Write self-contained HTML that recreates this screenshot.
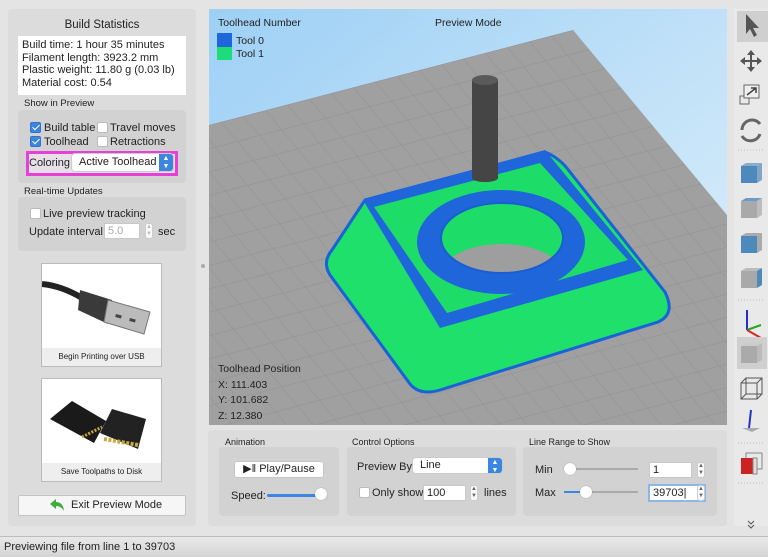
<!DOCTYPE html>
<html><head><style>
*{box-sizing:border-box;margin:0;padding:0}
body{width:768px;height:557px;overflow:hidden;background:#e4e4e4;font-family:"Liberation Sans",sans-serif;font-size:11px;color:#222;position:relative}
.a{position:absolute}
.grp{position:absolute;background:#d9d9d9;border-radius:4px}
.cb{position:absolute;width:11px;height:11px;border-radius:2px;background:#fff;border:1px solid #bbb}
.cb.on{background:#3b86e0;border-color:#2f74c8}
.cb.on:after{content:"";position:absolute;left:3px;top:0px;width:3px;height:6px;border:solid #fff;border-width:0 1.5px 1.5px 0;transform:rotate(45deg)}
.inp{position:absolute;background:#fff;border:1px solid #c8c8c8;height:16px;padding-left:3px;line-height:14px}
.step{position:absolute;width:8px;height:16px;border:1px solid #ccc;border-radius:3px;background:#fafafa;font-size:6px;line-height:7px;text-align:center;color:#666}
.sel{position:absolute;background:#fff;border-radius:3px;height:17px;line-height:17px;padding-left:7px;box-shadow:0 0 0 1px #ccc}
.sel i{position:absolute;right:0;top:0;width:14px;height:17px;background:#3b86e0;border-radius:0 3px 3px 0;color:#fff;font-style:normal;font-size:7px;line-height:8px;text-align:center;padding-top:1px}
.t{position:absolute;white-space:nowrap}
</style></head><body>
<div class="a" style="left:8px;top:9px;width:188px;height:517px;background:#dcdcdc;border-radius:4px"></div>
<div class="t" style="left:0;width:204px;text-align:center;top:19px;font-size:11.5px">Build Statistics</div>
<div class="a" style="left:18px;top:36px;width:168px;height:59px;background:#fff;padding:3px 4px;line-height:12.5px;font-size:11px">Build time: 1 hour 35 minutes<br>Filament length: 3923.2 mm<br>Plastic weight: 11.80 g (0.03 lb)<br>Material cost: 0.54</div>
<div class="t" style="left:24px;top:98px;font-size:9.5px">Show in Preview</div>
<div class="grp" style="left:18px;top:110px;width:168px;height:73px;background:#d2d2d2"></div>
<div class="cb on" style="left:30px;top:122px"></div><div class="t" style="left:44px;top:122px">Build table</div>
<div class="cb" style="left:97px;top:122px"></div><div class="t" style="left:110px;top:122px">Travel moves</div>
<div class="cb on" style="left:30px;top:136px"></div><div class="t" style="left:44px;top:136px">Toolhead</div>
<div class="cb" style="left:97px;top:136px"></div><div class="t" style="left:110px;top:136px">Retractions</div>
<div class="a" style="left:26px;top:151px;width:152px;height:25px;border:3px solid #e83fd8;background:#e8e0e8"></div>
<div class="t" style="left:29px;top:157px">Coloring</div>
<div class="sel" style="left:72px;top:154px;width:101px">Active Toolhead<i>▲<br>▼</i></div>
<div class="t" style="left:24px;top:186px;font-size:9.5px">Real-time Updates</div>
<div class="grp" style="left:18px;top:197px;width:168px;height:54px;background:#d2d2d2"></div>
<div class="cb" style="left:30px;top:208px"></div><div class="t" style="left:43px;top:208px">Live preview tracking</div>
<div class="t" style="left:29px;top:226px">Update interval</div>
<div class="inp" style="left:104px;top:223px;width:36px;color:#aaa">5.0</div>
<div class="step" style="left:145px;top:223px;color:#bbb">▲<br>▼</div>
<div class="t" style="left:158px;top:226px">sec</div>
<div class="a" style="left:41px;top:263px;width:121px;height:104px;background:#fff;border:1px solid #bbb"></div>
<svg class="a" style="left:42px;top:264px" width="119" height="84">
<path d="M0 20 Q20 22 40 34" stroke="#222" stroke-width="6" fill="none"/>
<path d="M38 26 L70 36 L66 60 L36 46 Z" fill="#3a3a3a"/>
<path d="M66 36 L108 48 L102 70 L62 58 Z" fill="#bbb" stroke="#777"/>
<rect x="74" y="50" width="6" height="3" fill="#444" transform="rotate(16 74 50)"/>
<rect x="88" y="54" width="6" height="3" fill="#444" transform="rotate(16 88 54)"/>
</svg>
<div class="a" style="left:42px;top:348px;width:119px;height:18px;background:#eee;font-size:8px;text-align:center;line-height:18px">Begin Printing over USB</div>
<div class="a" style="left:41px;top:378px;width:121px;height:104px;background:#fff;border:1px solid #bbb"></div>
<svg class="a" style="left:42px;top:379px" width="119" height="84">
<path d="M8 40 L30 22 L64 42 L52 64 Z" fill="#1a1a1a"/>
<path d="M58 54 L70 30 L104 40 L96 70 Z" fill="#222"/>
<path d="M62 60 L96 66" stroke="#c8a840" stroke-width="4" stroke-dasharray="3 1.5"/>
<path d="M40 58 L60 48" stroke="#c8a840" stroke-width="3" stroke-dasharray="2 1.5"/>
</svg>
<div class="a" style="left:42px;top:463px;width:119px;height:18px;background:#eee;font-size:8px;text-align:center;line-height:18px">Save Toolpaths to Disk</div>
<div class="a" style="left:18px;top:495px;width:168px;height:21px;background:#f6f6f6;border:1px solid #c4c4c4;border-radius:2px"></div>
<svg class="a" style="left:48px;top:499px" width="18" height="13"><path d="M2 5 L8 0 L8 3 Q15 3 16 12 Q13 7 8 7 L8 10 Z" fill="#3cae3c"/></svg>
<div class="t" style="left:71px;top:499px">Exit Preview Mode</div>
<div class="a" style="left:201px;top:264px;width:4px;height:4px;border-radius:2px;background:#aaa"></div>
<svg class="a" style="left:209px;top:9px" width="518" height="416" viewBox="209 9 518 416">
<defs>
<linearGradient id="sky" x1="0" y1="0" x2="1" y2="1"><stop offset="0" stop-color="#9dd0f5"/><stop offset="1" stop-color="#e2f1fb"/></linearGradient>
<pattern id="grid" width="1" height="1" patternUnits="userSpaceOnUse" patternTransform="matrix(22 -5.74 16 19.2 573 30)"><rect width="1" height="1" fill="#a0a0a0"/><path d="M0 0H1M0 0V1" stroke="#929292" stroke-width="0.05"/></pattern>
<clipPath id="hole"><ellipse cx="502" cy="238" rx="61" ry="35"/></clipPath>
</defs>
<rect x="209" y="9" width="518" height="416" fill="url(#sky)"/>
<path d="M209 125 L573 30 L727 215 L727 425 L209 425 Z" fill="url(#grid)"/>
<path d="M365 200 L545 152 Q560 158 570 172 L665 292 Q676 314 658 322 L440 390 Q420 396 410 384 L330 275 Q322 262 332 250 Z" fill="#1ee06a" stroke="#1a62d8" stroke-width="3"/>
<path d="M363 200 L545 150 L643 270 L440 328 Z" fill="#1f66db"/>
<path d="M374 207 L540 163 L628 260 L447 313 Z" fill="#1edc68"/>
<ellipse cx="501" cy="242" rx="84" ry="52" fill="#1f66db"/>
<ellipse cx="502" cy="238" rx="61" ry="35" fill="#1edc68"/>
<ellipse cx="502" cy="274" rx="60" ry="30" fill="#9e9e9e" clip-path="url(#hole)"/>
<ellipse cx="502" cy="238" rx="61" ry="35" fill="none" stroke="#1a5ed0" stroke-width="2"/>
<rect x="472" y="80" width="26" height="98" fill="#454545"/>
<ellipse cx="485" cy="80" rx="13" ry="5" fill="#5a5a5a"/>
<ellipse cx="485" cy="178" rx="13" ry="4" fill="#454545"/>
</svg>
<div class="t" style="left:218px;top:17px;font-size:10.5px">Toolhead Number</div>
<div class="t" style="left:435px;top:17px;font-size:10.5px">Preview Mode</div>
<div class="a" style="left:217px;top:33px;width:15px;height:14px;background:#1f66db"></div>
<div class="a" style="left:217px;top:47px;width:15px;height:13px;background:#1edc7a"></div>
<div class="t" style="left:236px;top:35px;font-size:10.5px">Tool 0</div>
<div class="t" style="left:236px;top:48px;font-size:10.5px">Tool 1</div>
<div class="t" style="left:218px;top:362px;font-size:10.5px;line-height:15.7px">Toolhead Position<br>X: 111.403<br>Y: 101.682<br>Z: 12.380</div>
<div class="a" style="left:208px;top:430px;width:519px;height:96px;background:#dcdcdc;border-radius:4px"></div>
<div class="t" style="left:225px;top:437px;font-size:9px">Animation</div>
<div class="t" style="left:352px;top:437px;font-size:9px">Control Options</div>
<div class="t" style="left:529px;top:437px;font-size:9px">Line Range to Show</div>
<div class="grp" style="left:219px;top:447px;width:120px;height:69px;background:#d2d2d2"></div>
<div class="grp" style="left:347px;top:447px;width:169px;height:69px;background:#d2d2d2"></div>
<div class="grp" style="left:523px;top:447px;width:194px;height:69px;background:#d2d2d2"></div>
<div class="a" style="left:235px;top:462px;width:88px;height:15px;background:#fff;border-radius:2px;box-shadow:0 0 0 .5px #bbb;text-align:center;line-height:15px">▶‖ Play/Pause</div>
<div class="t" style="left:231px;top:490px">Speed:</div>
<div class="a" style="left:267px;top:494px;width:53px;height:3px;background:#3b86e0;border-radius:2px"></div>
<div class="a" style="left:315px;top:488px;width:12px;height:12px;background:#fff;border-radius:6px;box-shadow:0 0 1px #777"></div>
<div class="t" style="left:357px;top:461px">Preview By</div>
<div class="sel" style="left:413px;top:458px;width:89px;height:15px;line-height:15px">Line<i style="height:15px">▲<br>▼</i></div>
<div class="cb" style="left:359px;top:487px"></div>
<div class="t" style="left:372px;top:487px">Only show</div>
<div class="inp" style="left:423px;top:485px;width:43px">100</div>
<div class="step" style="left:470px;top:485px">▲<br>▼</div>
<div class="t" style="left:484px;top:487px">lines</div>
<div class="t" style="left:535px;top:464px">Min</div>
<div class="a" style="left:570px;top:468px;width:68px;height:2px;background:#aaa"></div>
<div class="a" style="left:564px;top:463px;width:12px;height:12px;background:#fff;border-radius:6px;box-shadow:0 0 1px #777"></div>
<div class="inp" style="left:649px;top:462px;width:43px">1</div>
<div class="step" style="left:697px;top:462px">▲<br>▼</div>
<div class="t" style="left:535px;top:487px">Max</div>
<div class="a" style="left:564px;top:491px;width:74px;height:2px;background:#aaa"></div>
<div class="a" style="left:564px;top:491px;width:20px;height:2px;background:#3b86e0"></div>
<div class="a" style="left:580px;top:486px;width:12px;height:12px;background:#fff;border-radius:6px;box-shadow:0 0 1px #777"></div>
<div class="inp" style="left:648px;top:484px;width:58px;height:18px;border:2px solid #8cb6e8">39703|</div>
<div class="step" style="left:697px;top:485px">▲<br>▼</div>
<div class="a" style="left:734px;top:9px;width:34px;height:517px;background:#e9e9e9"></div>
<div class="a" style="left:737px;top:11px;width:31px;height:31px;background:#cfcfcf"></div>
<svg class="a" style="left:734px;top:0" width="34" height="540">
<path d="M12 14 L12 34 L16 29 L20 37 L23 35 L19 28 L25 28 Z" fill="#555"/>
<g fill="#555"><path d="M17 50 L13 55 L21 55Z M17 72 L13 67 L21 67Z M6 61 L11 57 L11 65Z M28 61 L23 57 L23 65Z"/><rect x="16" y="54" width="2" height="14"/><rect x="10" y="60" width="14" height="2"/></g>
<rect x="6" y="96" width="9" height="8" fill="none" stroke="#666"/><rect x="10" y="85" width="15" height="13" fill="#eee" stroke="#666"/><path d="M13 95 L22 88 M17 88 L22 88 L22 93" stroke="#444" stroke-width="1.5" fill="none"/>
<path d="M8 130 A10 10 0 0 1 26 124 M26 134 A10 10 0 0 1 8 136" stroke="#666" stroke-width="3" fill="none"/>
<path d="M4 150 H30" stroke="#bbb" stroke-dasharray="1 2"/>
<g transform="translate(0,160)"><path d="M7 6 L12 3 L28 3 L23 6Z" fill="#8aaccc"/><rect x="7" y="6" width="16" height="17" fill="#4e89bd"/><path d="M23 6 L28 3 L28 20 L23 23Z" fill="#7da6c8"/></g>
<g transform="translate(0,195)"><path d="M7 6 L12 3 L28 3 L23 6Z" fill="#6b9cc8"/><rect x="7" y="6" width="16" height="17" fill="#a9a9a9"/><path d="M23 6 L28 3 L28 20 L23 23Z" fill="#bdbdbd"/></g>
<g transform="translate(0,230)"><path d="M7 6 L12 3 L28 3 L23 6Z" fill="#aaa"/><rect x="7" y="6" width="16" height="17" fill="#4e89bd"/><path d="M23 6 L28 3 L28 20 L23 23Z" fill="#aaa"/></g>
<g transform="translate(0,265)"><path d="M7 6 L12 3 L28 3 L23 6Z" fill="#bbb"/><rect x="7" y="6" width="16" height="17" fill="#a9a9a9"/><path d="M23 6 L28 3 L28 20 L23 23Z" fill="#4e89bd"/></g>
<path d="M4 300 H30" stroke="#bbb" stroke-dasharray="1 2"/>
<path d="M13 330 V310" stroke="#2233cc" stroke-width="2"/><path d="M13 330 L27 325" stroke="#2a2" stroke-width="2"/><path d="M13 330 L27 338" stroke="#d22" stroke-width="2"/>
<rect x="3" y="337" width="30" height="32" fill="#cfcfcf"/>
<g transform="translate(0,340)"><path d="M7 6 L12 3 L28 3 L23 6Z" fill="#ccc"/><rect x="7" y="6" width="16" height="17" fill="#aaa"/><path d="M23 6 L28 3 L28 20 L23 23Z" fill="#bbb"/></g>
<g transform="translate(0,375)" fill="none" stroke="#555"><rect x="7" y="8" width="16" height="16"/><rect x="12" y="3" width="16" height="16"/><path d="M7 8 L12 3 M23 8 L28 3 M7 24 L12 19 M23 24 L28 19"/></g>
<path d="M8 428 L26 428 L18 432 Z" fill="#aaa"/><path d="M15 428 L17 410" stroke="#2233cc" stroke-width="2"/>
<path d="M4 443 H30" stroke="#bbb" stroke-dasharray="1 2"/>
<g transform="translate(0,450)"><rect x="12" y="3" width="16" height="16" fill="none" stroke="#888"/><rect x="7" y="8" width="12" height="16" fill="#c22"/><rect x="19" y="8" width="4" height="16" fill="#ddd" stroke="#888"/></g>
<path d="M4 483 H30" stroke="#bbb" stroke-dasharray="1 2"/>
<path d="M14 521 L17 524 L20 521 M14 525 L17 528 L20 525" stroke="#555" fill="none"/>
</svg>
<div class="a" style="left:0;top:536px;width:768px;height:21px;background:linear-gradient(#e9e9e9,#d4d4d4);border-top:1px solid #bdbdbd"></div>
<div class="t" style="left:4px;top:541px;font-size:11px">Previewing file from line 1 to 39703</div>
</body></html>
